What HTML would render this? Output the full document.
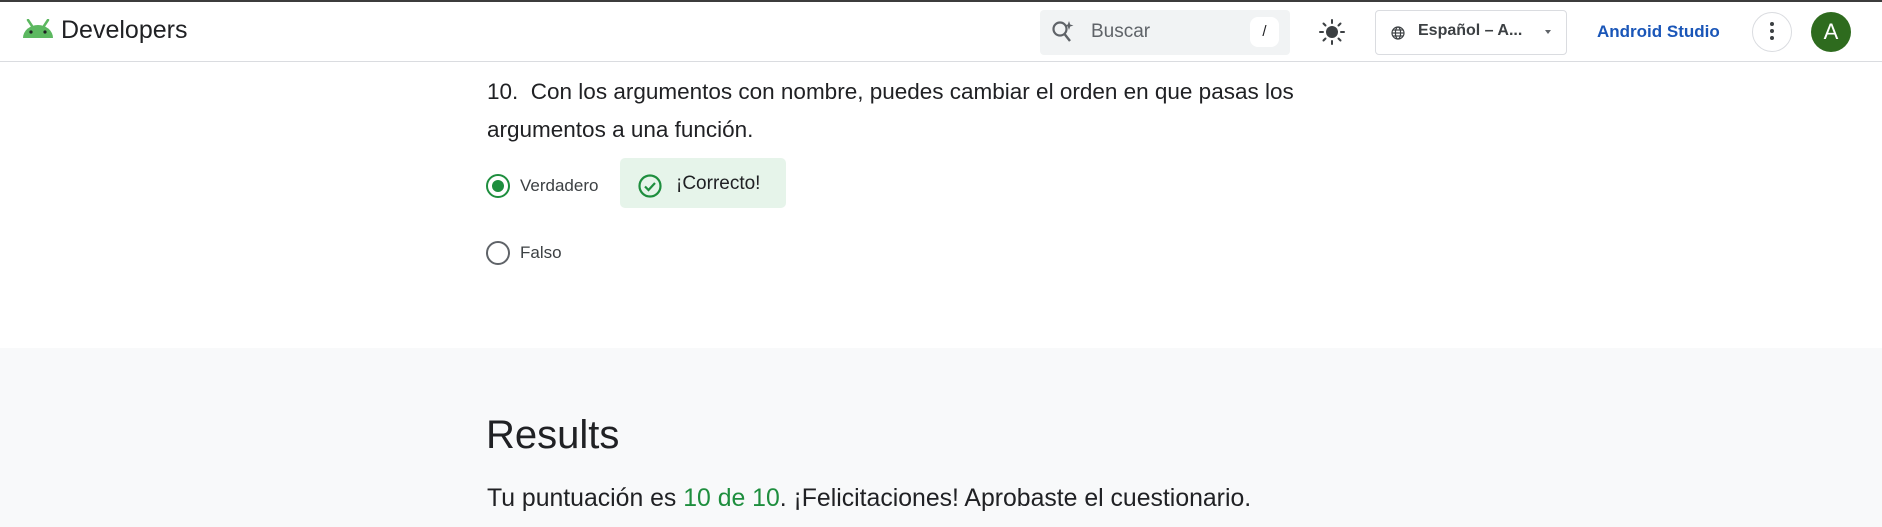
<!DOCTYPE html>
<html><head><meta charset="utf-8"><style>
*{margin:0;padding:0;box-sizing:border-box}
body{width:1882px;height:527px;overflow:hidden;background:#fff;font-family:"Liberation Sans",sans-serif;color:#202124;position:relative}
.abs{position:absolute}
.topbar{left:0;top:0;width:1882px;height:2px;background:#3c3c3c}
.hdr{left:0;top:2px;width:1882px;height:60px;border-bottom:1px solid #dadce0;background:#fff}
.gray{left:0;top:348px;width:1882px;height:179px;background:#f8f9fa}
</style></head><body>
<div class="abs topbar"></div>
<div class="abs hdr"></div>
<svg class="abs" style="left:22px;top:19px" width="32" height="20" viewBox="0 0 32 20">
<line x1="6" y1="1" x2="10" y2="7" stroke="#5cb860" stroke-width="2.5" stroke-linecap="round"/>
<line x1="26" y1="1" x2="22" y2="7" stroke="#5cb860" stroke-width="2.5" stroke-linecap="round"/>
<path d="M1 19 A15 13 0 0 1 31 19 Z" fill="#5cb860"/>
<circle cx="9" cy="13" r="1.6" fill="#202124"/><circle cx="23" cy="13" r="1.6" fill="#202124"/>
</svg>
<div class="abs" style="left:61px;top:16px;font-size:25px;color:#202124">Developers</div>

<div class="abs" style="left:1040px;top:10px;width:250px;height:45px;background:#f1f3f4;border-radius:4px"></div>
<svg class="abs" style="left:1051px;top:19px" width="26" height="26" viewBox="0 0 26 26"><circle cx="9" cy="10" r="6.5" fill="none" stroke="#5f6368" stroke-width="2.2"/><line x1="13.5" y1="15" x2="19" y2="22" stroke="#5f6368" stroke-width="2.4"/><path d="M18 2 L19.2 5.5 L22.5 6.5 L19.2 7.5 L18 11 L16.8 7.5 L13.5 6.5 L16.8 5.5 Z" fill="#5f6368"/></svg>
<div class="abs" style="left:1091px;top:21px;font-size:19px;color:#5f6368">Buscar</div>
<div class="abs" style="left:1250px;top:17px;width:29px;height:30px;background:#fff;border-radius:8px;font-size:15px;text-align:center;line-height:30px;color:#202124">/</div>

<svg class="abs" style="left:1318px;top:18px" width="28" height="28" viewBox="0 0 28 28"><circle cx="14" cy="14" r="6" fill="#3c4043"/><g stroke="#3c4043" stroke-width="2" stroke-linecap="round"><line x1="14" y1="2" x2="14" y2="5"/><line x1="14" y1="23" x2="14" y2="26"/><line x1="2" y1="14" x2="5" y2="14"/><line x1="23" y1="14" x2="26" y2="14"/><line x1="5.5" y1="5.5" x2="7.5" y2="7.5"/><line x1="20.5" y1="20.5" x2="22.5" y2="22.5"/><line x1="5.5" y1="22.5" x2="7.5" y2="20.5"/><line x1="20.5" y1="7.5" x2="22.5" y2="5.5"/></g></svg>

<div class="abs" style="left:1375px;top:10px;width:192px;height:45px;border:1px solid #dadce0;border-radius:4px"></div>
<svg class="abs" style="left:1391px;top:26px" width="14" height="14" viewBox="0 0 14 14"><g fill="none" stroke="#3c4043" stroke-width="1.2"><circle cx="7" cy="7" r="6"/><ellipse cx="7" cy="7" rx="2.6" ry="6"/><line x1="1" y1="7" x2="13" y2="7"/><line x1="2" y1="4" x2="12" y2="4"/><line x1="2" y1="10" x2="12" y2="10"/></g></svg>
<div class="abs" style="left:1418px;top:22px;font-size:16px;font-weight:bold;color:#3c4043;white-space:nowrap">Español – A...</div>
<div class="abs" style="left:1545px;top:30px;width:0;height:0;border-left:3.5px solid transparent;border-right:3.5px solid transparent;border-top:4px solid #5f6368"></div>

<div class="abs" style="left:1597px;top:22px;font-size:17px;font-weight:bold;color:#1a56b8;white-space:nowrap">Android Studio</div>
<div class="abs" style="left:1752px;top:12px;width:40px;height:40px;border:1px solid #dadce0;border-radius:50%"></div>
<div class="abs" style="left:1770px;top:22px;width:4px;height:4px;border-radius:50%;background:#3c4043;box-shadow:0 7px 0 #3c4043,0 14px 0 #3c4043"></div>
<div class="abs" style="left:1811px;top:12px;width:40px;height:40px;border-radius:50%;background:#2e6b1e;color:#fff;font-size:22px;text-align:center;line-height:40px">A</div>

<div class="abs" style="left:487px;top:73px;width:830px;font-size:22.5px;line-height:38px;color:#202124">10.&nbsp; Con los argumentos con nombre, puedes cambiar el orden en que pasas los argumentos a una función.</div>

<div class="abs" style="left:486px;top:174px;width:24px;height:24px;border:2.5px solid #1e8e3e;border-radius:50%"></div>
<div class="abs" style="left:492px;top:180px;width:12px;height:12px;background:#1e8e3e;border-radius:50%"></div>
<div class="abs" style="left:520px;top:176px;font-size:17px;color:#3c4043">Verdadero</div>
<div class="abs" style="left:620px;top:158px;width:166px;height:50px;background:#e6f4ea;border-radius:5px"></div>
<svg class="abs" style="left:637px;top:173px" width="26" height="26" viewBox="0 0 26 26"><circle cx="13" cy="13" r="10.5" fill="none" stroke="#1e8e3e" stroke-width="2.2"/><path d="M8 13.5 L11.5 17 L18 10" fill="none" stroke="#1e8e3e" stroke-width="2.2"/></svg>
<div class="abs" style="left:676px;top:173px;font-size:19px;color:#202124">¡Correcto!</div>

<div class="abs" style="left:486px;top:241px;width:24px;height:24px;border:2.5px solid #5f6368;border-radius:50%"></div>
<div class="abs" style="left:520px;top:243px;font-size:17px;color:#3c4043">Falso</div>

<div class="abs gray"></div>
<div class="abs" style="left:486px;top:413px;font-size:40px;color:#202124">Results</div>
<div class="abs" style="left:487px;top:485px;font-size:24.8px;color:#202124;white-space:nowrap">Tu puntuación es <span style="color:#1e8e3e">10 de 10</span>. ¡Felicitaciones! Aprobaste el cuestionario.</div>
</body></html>
